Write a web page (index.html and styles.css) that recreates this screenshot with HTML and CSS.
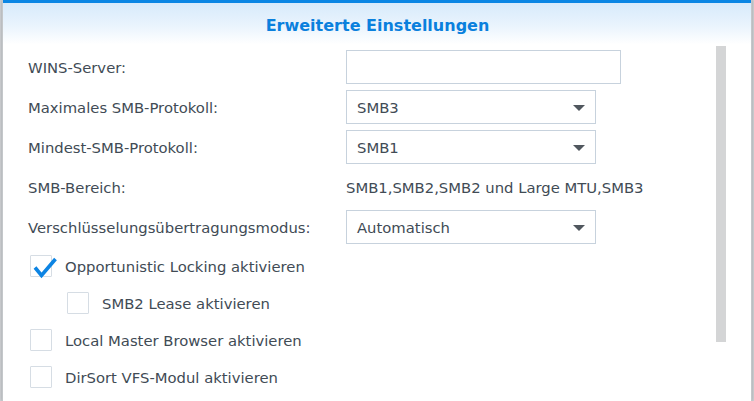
FILE: index.html
```html
<!DOCTYPE html>
<html lang="de">
<head>
<meta charset="utf-8">
<title>Erweiterte Einstellungen</title>
<link rel="stylesheet" href="styles.css">
</head>
<body>
<div class="dialog">
  <div class="topbar"></div>
  <div class="header">Erweiterte Einstellungen</div>
  <div class="content">
    <div class="form">
      <div class="row">
        <div class="label">WINS-Server:</div>
        <div class="field input wide"></div>
      </div>
      <div class="row">
        <div class="label">Maximales SMB-Protokoll:</div>
        <div class="field select"><span>SMB3</span><span class="arrow"></span></div>
      </div>
      <div class="row">
        <div class="label">Mindest-SMB-Protokoll:</div>
        <div class="field select"><span>SMB1</span><span class="arrow"></span></div>
      </div>
      <div class="row">
        <div class="label">SMB-Bereich:</div>
        <div class="value">SMB1,SMB2,SMB2 und Large MTU,SMB3</div>
      </div>
      <div class="row">
        <div class="label">Verschlüsselungsübertragungsmodus:</div>
        <div class="field select"><span>Automatisch</span><span class="arrow"></span></div>
      </div>
    </div>
    <div class="checks">
      <div class="check">
        <span class="box checked">
          <svg class="tick" width="26" height="24" viewBox="0 0 26 24"><path d="M3 10.5 L9.5 18.5 L23.5 2" fill="none" stroke="#0d84e3" stroke-width="3.6" stroke-linecap="butt" stroke-linejoin="miter"/></svg>
        </span>
        <span class="ctext">Opportunistic Locking aktivieren</span>
      </div>
      <div class="check sub">
        <span class="box"></span>
        <span class="ctext">SMB2 Lease aktivieren</span>
      </div>
      <div class="check">
        <span class="box"></span>
        <span class="ctext">Local Master Browser aktivieren</span>
      </div>
      <div class="check">
        <span class="box"></span>
        <span class="ctext">DirSort VFS-Modul aktivieren</span>
      </div>
    </div>
    <div class="scrollbar"></div>
  </div>
</div>
</body>
</html>
```

FILE: styles.css
```css
html, body {
  margin: 0;
  padding: 0;
}
body {
  background: #cfd2d5;
  width: 754px;
  height: 401px;
  overflow: hidden;
  font-family: "DejaVu Sans", Verdana, sans-serif;
  font-size: 14.8px;
  color: #414b55;
}
.dialog {
  margin-left: 2px;
  width: 750px;
  height: 401px;
  background: #ffffff;
  border-left: 1px solid #c4c7ca;
  border-right: 1px solid #c4c7ca;
  box-sizing: border-box;
  box-shadow: 0 0 3px rgba(0,0,0,0.25);
  display: flex;
  flex-direction: column;
}
.topbar {
  height: 3px;
  background: #0a86e4;
  flex: none;
}
.header {
  height: 46px;
  line-height: 46px;
  text-align: center;
  font-weight: bold;
  font-size: 16px;
  color: #0a80dd;
  background: linear-gradient(to bottom, #d7eafb 0%, #eaf4fd 50%, #ffffff 90%);
  flex: none;
  padding-left: 1px;
}
.content {
  position: relative;
  flex: 1;
  padding: 1px 0 0 25px;
}
.form {
  display: flex;
  flex-direction: column;
  gap: 6px;
}
.row {
  display: flex;
  align-items: center;
  height: 34px;
}
.label {
  width: 318px;
  flex: none;
}
.field {
  height: 34px;
  box-sizing: border-box;
  border: 1px solid #c7d2dd;
  background: #fff;
}
.input.wide {
  width: 275px;
}
.select {
  width: 250px;
  display: flex;
  align-items: center;
  justify-content: space-between;
  padding: 0 10px 0 10px;
}
.arrow {
  width: 0;
  height: 0;
  border-left: 6.5px solid transparent;
  border-right: 6.5px solid transparent;
  border-top: 6.5px solid #50575e;
  margin-top: 1px;
}
.checks {
  margin-top: 11px;
  display: flex;
  flex-direction: column;
  gap: 15px;
  padding-left: 2px;
}
.check {
  display: flex;
  align-items: center;
  height: 22px;
}
.check.sub {
  padding-left: 37px;
}
.box {
  position: relative;
  width: 22px;
  height: 22px;
  box-sizing: border-box;
  border: 1px solid #d6dde4;
  border-radius: 1px;
  background: #fff;
  flex: none;
  margin-right: 13px;
}
.tick {
  position: absolute;
  left: 1px;
  top: 1px;
}
.scrollbar {
  position: absolute;
  left: 713px;
  top: -3px;
  width: 10px;
  height: 296px;
  background: #d4d5d6;
}
```
